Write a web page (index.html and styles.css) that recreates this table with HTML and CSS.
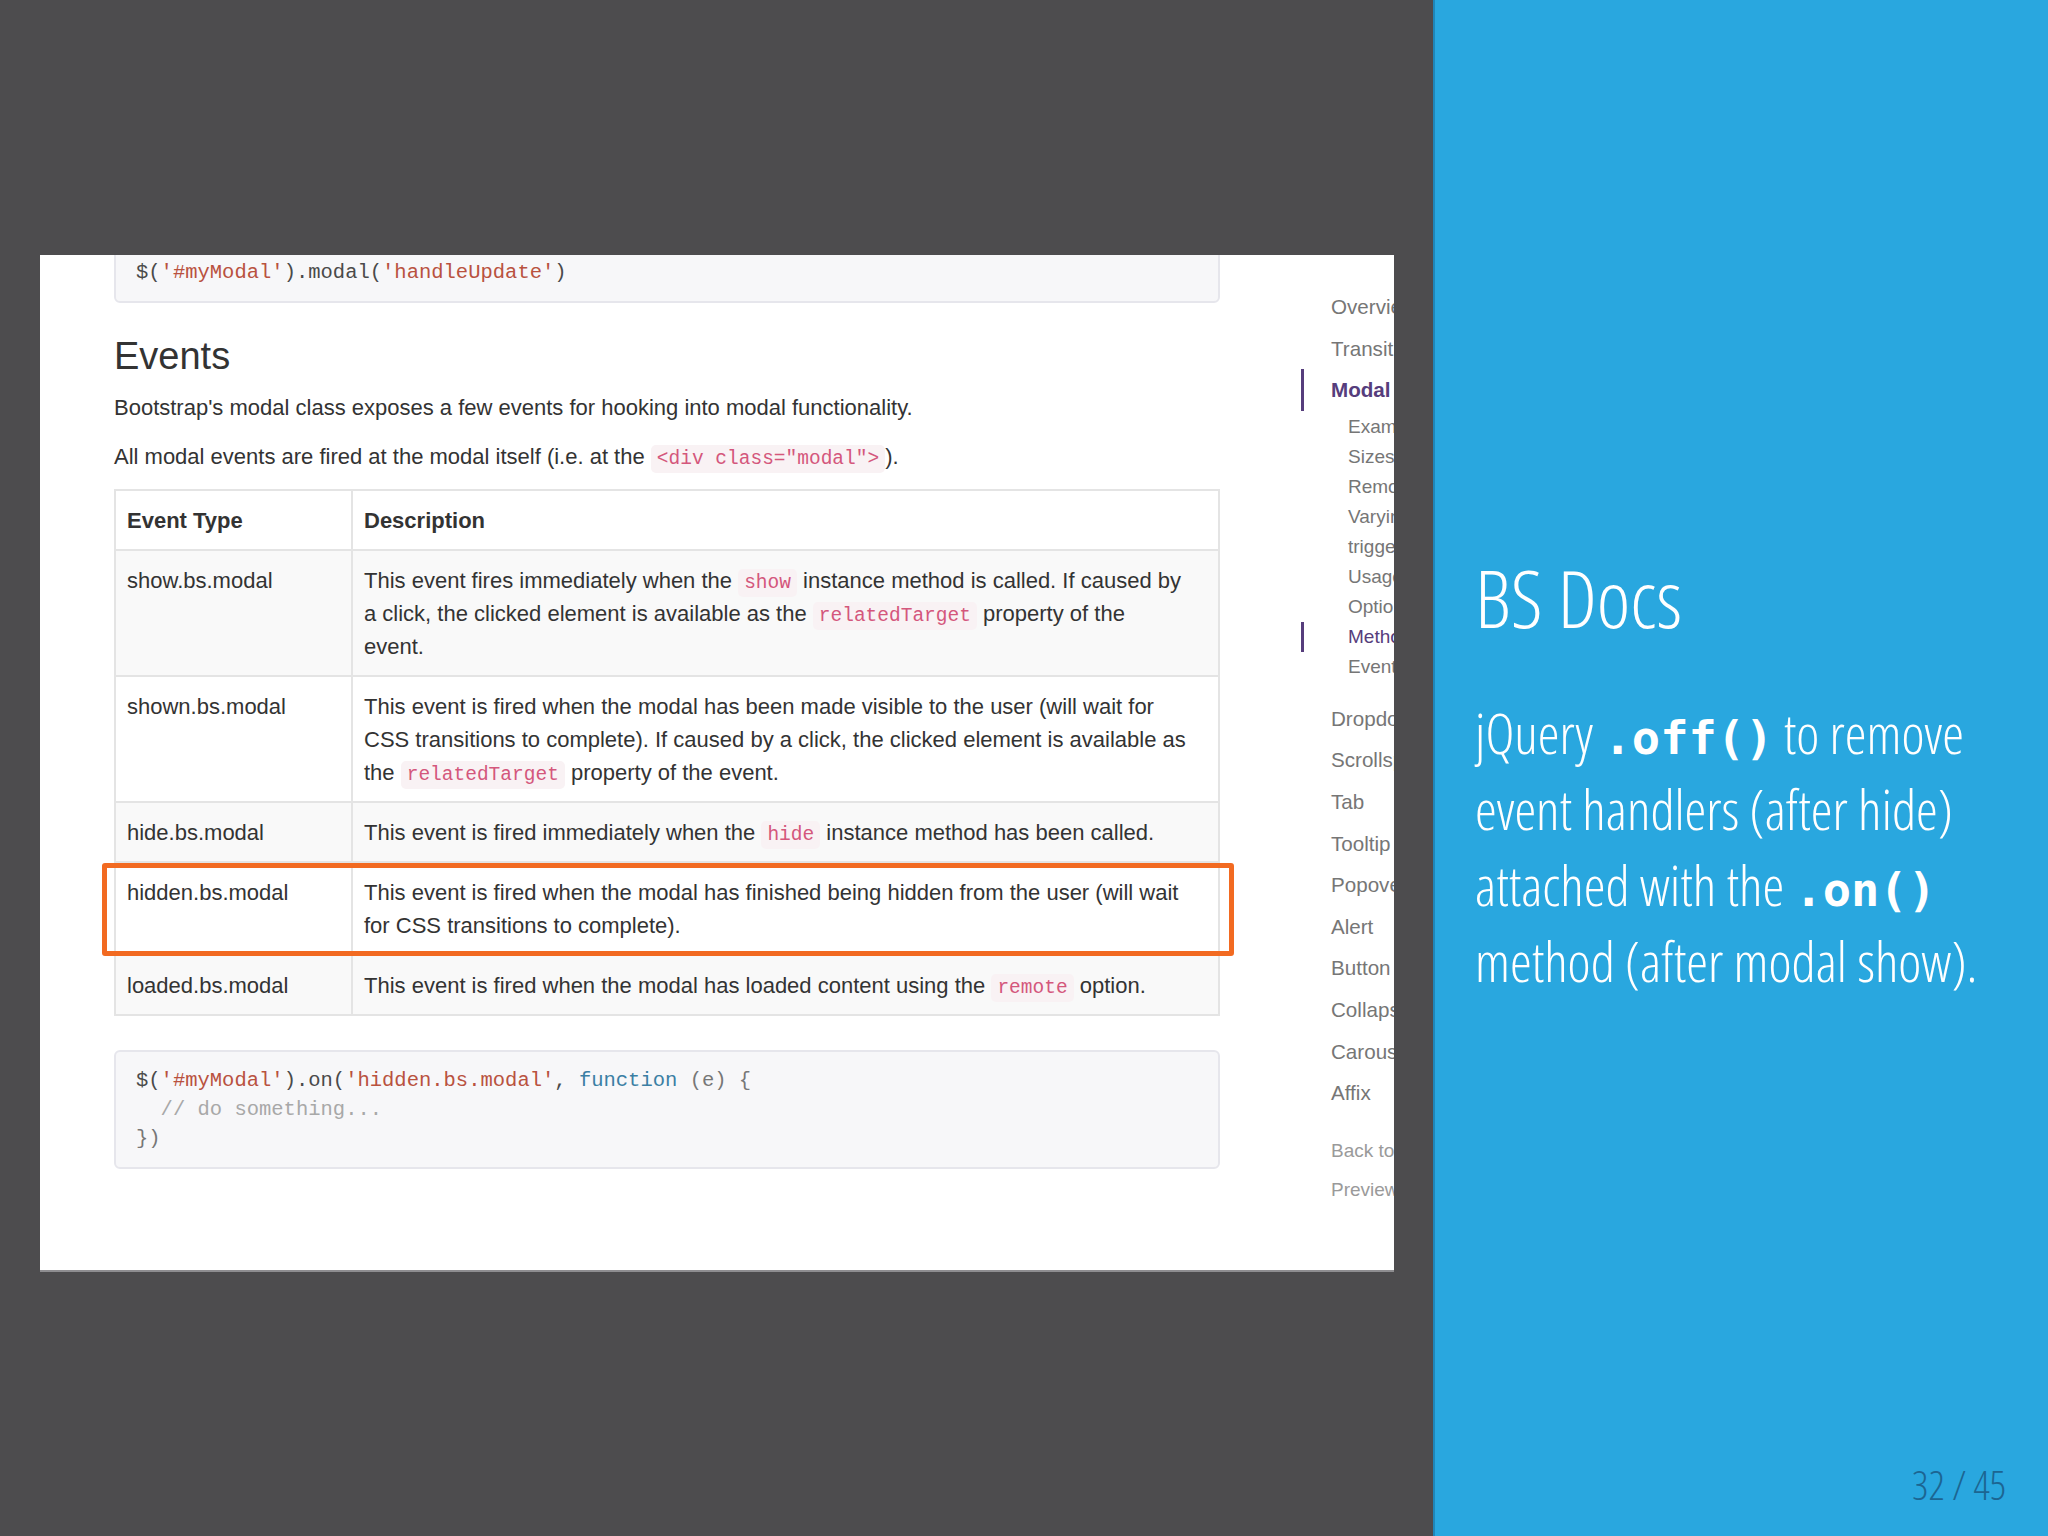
FILE: index.html
```html
<!DOCTYPE html>
<html lang="en">
<head>
<meta charset="utf-8">
<title>BS Docs</title>
<link rel="stylesheet" href="styles.css">
</head>
<body>
<div class="stage">
  <div class="shot">
    <div class="doc">
      <pre class="pre pre-top"><span class="p">$(</span><span class="s">'#myModal'</span><span class="p">).modal(</span><span class="s">'handleUpdate'</span><span class="p">)</span></pre>
      <h3 class="heading">Events</h3>
      <p class="para">Bootstrap's modal class exposes a few events for hooking into modal functionality.</p>
      <p class="para para-last">All modal events are fired at the modal itself (i.e. at the <code class="ic">&lt;div class="modal"&gt;</code>).</p>
      <div class="table-wrap">
        <table class="events">
          <thead>
            <tr><th class="c1">Event Type</th><th class="c2">Description</th></tr>
          </thead>
          <tbody>
            <tr><td>show.bs.modal</td><td class="desc">This event fires immediately when the <code class="ic">show</code> instance method is called. If caused by<br>a click, the clicked element is available as the <code class="ic">relatedTarget</code> property of the<br>event.</td></tr>
            <tr><td>shown.bs.modal</td><td class="desc">This event is fired when the modal has been made visible to the user (will wait for<br>CSS transitions to complete). If caused by a click, the clicked element is available as<br>the <code class="ic">relatedTarget</code> property of the event.</td></tr>
            <tr><td>hide.bs.modal</td><td class="desc">This event is fired immediately when the <code class="ic">hide</code> instance method has been called.</td></tr>
            <tr><td>hidden.bs.modal</td><td class="desc">This event is fired when the modal has finished being hidden from the user (will wait<br>for CSS transitions to complete).</td></tr>
            <tr><td>loaded.bs.modal</td><td class="desc">This event is fired when the modal has loaded content using the <code class="ic">remote</code> option.</td></tr>
          </tbody>
        </table>
        <div class="highlight"></div>
      </div>
      <pre class="pre pre-bottom"><span class="p">$(</span><span class="s">'#myModal'</span><span class="p">).on(</span><span class="s">'hidden.bs.modal'</span><span class="p">, </span><span class="k">function</span><span class="g"> (e) {</span>
<span class="c">  // do something...</span>
<span class="g">})</span></pre>
    </div>
    <ul class="nav">
      <li><a class="top">Overview</a></li>
      <li><a class="top">Transitions</a></li>
      <li>
        <a class="top active">Modal</a>
        <ul class="sub">
          <li><a class="sublink">Examples</a></li>
          <li><a class="sublink">Sizes</a></li>
          <li><a class="sublink">Remote content</a></li>
          <li><a class="sublink">Varying modal content based on trigger button</a></li>
          <li><a class="sublink">Usage</a></li>
          <li><a class="sublink">Options</a></li>
          <li><a class="sublink sub-active">Methods</a></li>
          <li><a class="sublink">Events</a></li>
        </ul>
      </li>
      <li><a class="top">Dropdown</a></li>
      <li><a class="top">Scrollspy</a></li>
      <li><a class="top">Tab</a></li>
      <li><a class="top">Tooltip</a></li>
      <li><a class="top">Popover</a></li>
      <li><a class="top">Alert</a></li>
      <li><a class="top">Button</a></li>
      <li><a class="top">Collapse</a></li>
      <li><a class="top">Carousel</a></li>
      <li><a class="top">Affix</a></li>
      <li class="extra-first"><a class="extra">Back to top</a></li>
      <li><a class="extra">Preview theme</a></li>
    </ul>
  </div>
</div>
<div class="side">
  <h1 class="title">BS Docs</h1>
  <p class="lead">jQuery <code class="hl">.off()</code> to remove event handlers (after hide) attached with the <code class="hl">.on()</code> method (after modal show).</p>
  <div class="page">32 / 45</div>
</div>
</body>
</html>
```
FILE: styles.css
```css
html, body {
  margin: 0;
  padding: 0;
}
body {
  width: 2048px;
  height: 1536px;
  display: flex;
  overflow: hidden;
  font-family: "Liberation Sans", Arial, sans-serif;
}
.stage {
  flex: none;
  width: 1433px;
  height: 1536px;
  box-sizing: border-box;
  background: #4d4c4e;
  padding: 255px 0 0 40px;
}
.shot {
  width: 1354px;
  height: 1015px;
  background: #fff;
  overflow: hidden;
  display: flex;
  box-shadow: 0 2px 0 #8e8d90;
}
.doc {
  flex: none;
  width: 1106px;
  margin-left: 74px;
  color: #333;
  font-size: 22px;
  line-height: 32.5px;
}
.pre {
  margin: 0;
  border: 2px solid #e6e6ec;
  background: #f7f7f9;
  border-radius: 6px;
  padding: 14px 20px;
  font-family: "Liberation Mono", "DejaVu Sans Mono", monospace;
  font-size: 20.5px;
  line-height: 29px;
  color: #555;
  white-space: pre;
}
.pre-top {
  margin-top: -13px;
}
.pre-bottom {
  margin-top: 34px;
}
.p { color: #4a4a4a; }
.s { color: #b9523f; }
.k { color: #3b7fa4; }
.g { color: #777; }
.c { color: #a8a8a8; }
.heading {
  margin: 32px 0 15px;
  font-size: 38px;
  line-height: 42px;
  font-weight: 400;
  color: #333;
}
.para {
  margin: 0 0 16px;
}
.para-last {
  margin-bottom: 16px;
}
.ic {
  font-family: "Liberation Mono", "DejaVu Sans Mono", monospace;
  font-size: 19.5px;
  line-height: 1;
  color: #d4577c;
  background: #f9f2f4;
  padding: 3px 6px;
  border-radius: 5px;
}
.table-wrap {
  position: relative;
}
.events {
  width: 100%;
  border-collapse: collapse;
  table-layout: fixed;
  line-height: 33px;
}
.events th,
.events td {
  border: 2px solid #e4e4e4;
  padding: 12.5px 11px;
  text-align: left;
  vertical-align: top;
}
.events th {
  font-weight: bold;
}
.events .c1 {
  width: 213px;
}
.events .desc {
  white-space: nowrap;
}
.events tbody tr:nth-child(odd) {
  background: #f9f9f9;
}
.highlight {
  position: absolute;
  left: -12px;
  right: -14px;
  top: 374px;
  height: 93px;
  box-sizing: border-box;
  border: 5px solid #f26a21;
  border-radius: 3px;
}
.nav {
  flex: none;
  width: 330px;
  margin: 0 0 0 81px;
  padding: 31px 0 0;
  list-style: none;
}
.nav li {
  list-style: none;
}
.nav a {
  display: block;
  border-left: 3px solid transparent;
  color: #767676;
}
.top {
  font-size: 20.6px;
  line-height: 41.6px;
  padding-left: 27px;
}
.active {
  font-weight: bold;
  color: #563d7c !important;
  border-left-color: #563d7c !important;
}
.sub {
  margin: 1px 0 16px;
  padding: 0;
}
.sublink {
  font-size: 19px;
  line-height: 30px;
  padding-left: 44px;
}
.sub-active {
  color: #563d7c !important;
  border-left-color: #563d7c !important;
}
.extra-first {
  margin-top: 17px;
}
.extra {
  font-size: 19px;
  line-height: 39px;
  padding-left: 27px;
  color: #9a9a9a !important;
}
.side {
  flex: 1;
  position: relative;
  background: #29a7df;
  border-left: 2px solid #1f86b9;
  padding: 549px 28px 0 40px;
  color: #fff;
  font-family: "Open Sans", "Liberation Sans", sans-serif;
  font-stretch: 75%;
  font-weight: 300;
}
.title {
  margin: 0;
  font-size: 80px;
  line-height: 96px;
  font-weight: 300;
}
.lead {
  margin: 50px 0 0;
  font-size: 55px;
  line-height: 76px;
}
.hl {
  font-family: "DejaVu Sans Mono", monospace;
  font-weight: bold;
  font-size: 47px;
  line-height: 0;
}
.page {
  position: absolute;
  right: 42px;
  bottom: 27px;
  font-size: 40px;
  line-height: 48px;
  color: #1c6592;
}
```
